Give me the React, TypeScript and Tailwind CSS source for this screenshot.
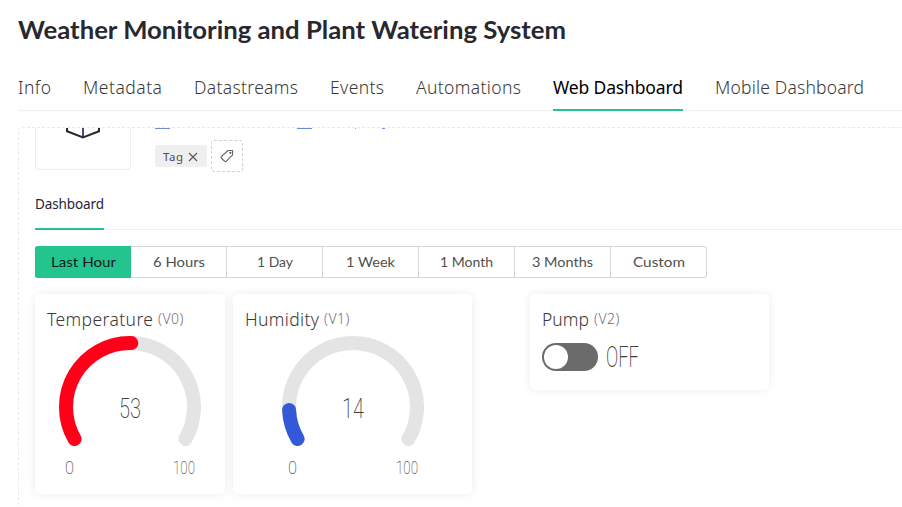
import { useLayoutEffect, useRef } from "react";
import type { ReactNode } from "react";

const GREEN = "bg-[#24c48e]";

/* Spreads or condenses a label so that it fills the given width. */
function Fit({ w, mode = "track", className = "", children }: { w: number; mode?: "track" | "scale"; className?: string; children: string }) {
  const ref = useRef<HTMLSpanElement>(null);
  useLayoutEffect(() => {
    const el = ref.current;
    if (!el) return;
    el.style.letterSpacing = "";
    el.style.transform = "";
    const natural = el.getBoundingClientRect().width;
    if (mode === "track") {
      el.style.letterSpacing = `${(w - natural) / (children.length - 1)}px`;
    } else {
      el.style.transform = `scaleX(${w / natural})`;
    }
  }, [w, mode, children]);
  return (
    <span className="block shrink-0" style={{ width: w }}>
      <span ref={ref} className={`inline-block origin-left whitespace-nowrap ${className}`}>{children}</span>
    </span>
  );
}

const tabs = [
  { label: "Info", w: 33 },
  { label: "Metadata", w: 79 },
  { label: "Datastreams", w: 104 },
  { label: "Events", w: 54 },
  { label: "Automations", w: 105 },
  { label: "Web Dashboard", w: 130, active: true },
  { label: "Mobile Dashboard", w: 149 },
];

const ranges = [
  { label: "Last Hour", w: 65 },
  { label: "6 Hours", w: 52 },
  { label: "1 Day", w: 36 },
  { label: "1 Week", w: 49 },
  { label: "1 Month", w: 53 },
  { label: "3 Months", w: 61 },
  { label: "Custom", w: 52 },
];

function Card({ title, titleW, pin, className, children }: { title: string; titleW: number; pin: string; className: string; children: ReactNode }) {
  return (
    <section className={`rounded-[5px] bg-white px-3 pt-[11px] shadow-[0_0_10px_rgba(0,0,0,0.08)] ${className}`}>
      <h2 className="flex h-7 items-center gap-[5px]">
        <Fit w={titleW} className="text-[17.5px] leading-7 font-light text-[#383838]">{title}</Fit>
        <Fit w={25.5} className="text-sm leading-7 font-light text-[#707070]">{pin}</Fit>
      </h2>
      {children}
    </section>
  );
}

function polar(deg: number) {
  const a = (deg * Math.PI) / 180;
  return `${71 + 64 * Math.cos(a)} ${71 + 64 * Math.sin(a)}`;
}

function Gauge({ value, valueW, sweep, color, className }: { value: string; valueW: number; sweep: number; color: string; className: string }) {
  return (
    <div className={`mt-[3px] w-[142px] ${className}`}>
      <div className="grid h-[114px]">
        <svg className="col-start-1 row-start-1 h-[114px] w-[142px]" viewBox="0 0 142 114" fill="none" strokeWidth="14" strokeLinecap="round">
          <path d={`M${polar(150)}A64 64 0 1 1 ${polar(390)}`} stroke="#e4e4e4" />
          <path d={`M${polar(150)}A64 64 0 0 1 ${polar(150 + sweep)}`} stroke={color} />
        </svg>
        <div className="col-start-1 row-start-1 flex h-[145px] items-center justify-center">
          <Fit w={valueW} mode="scale" className="font-[family-name:Roboto] text-[28px] leading-8 font-extralight text-[#404040]">{value}</Fit>
        </div>
      </div>
      <div className="flex justify-between pt-[6px] pr-[6px] pl-[6px]">
        <Fit w={9} mode="scale" className="font-[family-name:Roboto] text-[18px] leading-6 font-extralight text-[#606060]">0</Fit>
        <Fit w={22} mode="scale" className="font-[family-name:Roboto] text-[18px] leading-6 font-extralight text-[#606060]">100</Fit>
      </div>
    </div>
  );
}

export default function App() {
  return (
    <main className="flex h-[507px] w-[902px] flex-col overflow-hidden bg-white pl-[18px] font-['Noto_Sans',sans-serif] text-[#505050]">
      <h1 className="pt-[14px]">
        <Fit w={548} mode="scale" className="font-[family-name:Lato] text-[24px] leading-8 font-bold text-[#28282e]">Weather Monitoring and Plant Watering System</Fit>
      </h1>

      <nav className="mt-[19px] flex h-[46px] shrink-0 gap-8 border-b border-[#eeeeee]">
        {tabs.map((t) => (
          <div key={t.label} className={`flex h-[46px] flex-col justify-between pt-2 ${t.active ? "text-black" : "font-light text-[#383838]"}`}>
            <Fit w={t.w} className="text-[17.5px] leading-7">{t.label}</Fit>
            {t.active && <div className={`h-[2px] ${GREEN}`} />}
          </div>
        ))}
      </nav>

      <div className="mt-4 h-[390px] shrink-0 rounded-tl-[4px] border-t border-l border-dashed border-[#eaeaea] pl-4">
        <div className="flex h-[42px]">
          <div className="flex w-24 justify-center rounded-b-[4px] border-x border-b border-[#eeeeee]">
            <svg className="h-3 w-9" viewBox="0 0 36 12" fill="none" stroke="#28282e" strokeWidth="2">
              <path d="M2 0v3.2l16 6.3 16-6.3V0" />
              <path d="M18 0v9" stroke="#27276a" strokeWidth="1.7" />
            </svg>
          </div>
          <div className="ml-6">
            <div className="flex h-px">
              <i className="h-px w-[15px] bg-[#7089dc]" />
              <i className="ml-[127px] h-px w-[15px] bg-[#7089dc]" />
              <i className="ml-[43px] h-px w-px bg-[#9c9cdc]" />
              <i className="ml-[26px] h-px w-[3px] bg-[#7b8edc]" />
            </div>
            <div className="mt-[11px] flex items-center gap-1">
              <div className="flex h-[22px] w-[52px] items-center gap-[5px] rounded-[3px] bg-[#efefef] pl-2">
                <div className="pb-[3px]">
                  <Fit w={20} className="text-[11.5px] leading-5 text-[#505050]">Tag</Fit>
                </div>
                <svg className="mt-[2px] h-[10px] w-[10px]" viewBox="0 0 10 10" stroke="#555" strokeWidth="1.1">
                  <path d="m1 1 8 8M9 1 1 9" />
                </svg>
              </div>
              <div className="flex h-8 w-8 items-center justify-center rounded-[3px] border border-dashed border-[#d2d2d2]">
                <svg className="h-[14px] w-[14px]" viewBox="0 0 14 14" fill="none" stroke="#606060" strokeWidth="1.1" strokeLinejoin="round">
                  <path d="M8 1.5h4.6v4.3l-6.5 6.5q-.7.6-1.4 0L1.3 9q-.6-.7 0-1.3z" />
                  <circle cx="10.4" cy="3.8" r=".6" fill="#606060" />
                </svg>
              </div>
            </div>
          </div>
        </div>

        <div className="mt-[18px] flex h-[42px] border-b border-[#eeeeee]">
          <div className="flex h-[42px] flex-col justify-between pt-[3px]">
            <Fit w={69} className="text-[13.5px] leading-6 text-[#252532]">Dashboard</Fit>
            <div className={`h-[2px] ${GREEN}`} />
          </div>
        </div>

        <div className="mt-4 flex h-8 w-[672px] rounded-[3px] border border-[#d6d6d6] border-l-[#24c48e] font-[family-name:Lato] text-[13.5px]">
          {ranges.map((r, i) => (
            <div
              key={r.label}
              className={
                i === 0
                  ? `-my-px -ml-px flex w-24 shrink-0 items-center justify-center rounded-l-[3px] ${GREEN} text-[#101820]`
                  : i === ranges.length - 1
                    ? "flex w-[95px] items-center justify-center"
                    : "flex w-24 shrink-0 items-center justify-center border-r border-[#d6d6d6]"
              }
            >
              <Fit w={r.w} mode="scale" className="leading-5">{r.label}</Fit>
            </div>
          ))}
        </div>

        <div className="mt-4 flex items-start">
          <Card title="Temperature" titleW={106} pin="(V0)" className="h-[200px] w-[190px]">
            <Gauge value="53" valueW={22} sweep={121.2} color="#ff0018" className="ml-3" />
          </Card>
          <Card title="Humidity" titleW={74} pin="(V1)" className="ml-2 h-[200px] w-[239px]">
            <Gauge value="14" valueW={22} sweep={27.3} color="#3459d8" className="ml-[36.5px]" />
          </Card>
          <Card title="Pump" titleW={47} pin="(V2)" className="ml-[58px] h-24 w-[239px]">
            <div className="mt-[10px] flex h-7 items-center gap-2">
              <div className="flex h-7 w-14 items-center rounded-full bg-[#6b6b6b] px-[2px]">
                <div className="h-6 w-6 rounded-full bg-white" />
              </div>
              <div className="pt-[2px]">
                <Fit w={33} mode="scale" className="font-[family-name:Roboto] text-[29px] leading-7 font-extralight text-[#404040]">OFF</Fit>
              </div>
            </div>
          </Card>
        </div>
      </div>
    </main>
  );
}
